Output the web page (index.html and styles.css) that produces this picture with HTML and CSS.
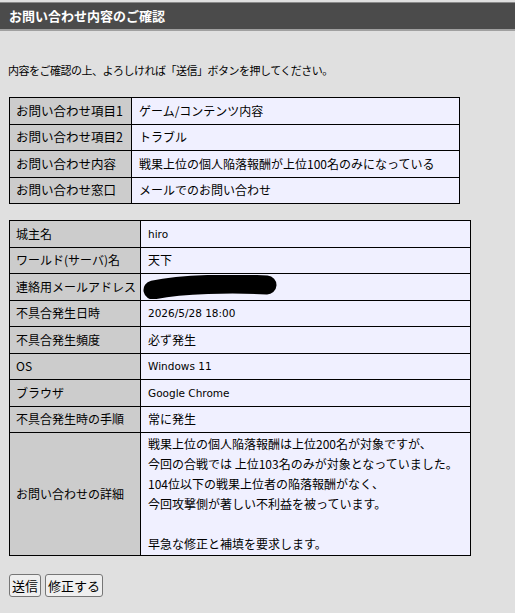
FILE: index.html
```html
<!DOCTYPE html>
<html lang="ja">

<head>
    <meta charset="utf-8">
    <title>お問い合わせ内容のご確認</title>
    <link rel="stylesheet" href="styles.css">
</head>

<body>
    <h1 class="titlebar">お問い合わせ内容のご確認</h1>
    <main class="content">
        <p class="lead">内容をご確認の上、よろしければ「送信」ボタンを押してください。</p>

        <table class="confirm confirm-top">
            <tr>
                <th>お問い合わせ項目1</th>
                <td>ゲーム/コンテンツ内容</td>
            </tr>
            <tr>
                <th>お問い合わせ項目2</th>
                <td>トラブル</td>
            </tr>
            <tr>
                <th>お問い合わせ内容</th>
                <td>戦果上位の個人陥落報酬が上位100名のみになっている</td>
            </tr>
            <tr>
                <th>お問い合わせ窓口</th>
                <td>メールでのお問い合わせ</td>
            </tr>
        </table>

        <table class="confirm confirm-detail">
            <tr>
                <th>城主名</th>
                <td class="ascii">hiro</td>
            </tr>
            <tr>
                <th>ワールド(サーバ)名</th>
                <td>天下</td>
            </tr>
            <tr>
                <th>連絡用メールアドレス</th>
                <td class="masked">
                    <svg class="redact" width="136" height="24" viewBox="0 0 136 24">
                        <path d="M11 15 C 40 9, 90 8, 125 10" stroke="#000" stroke-width="19" stroke-linecap="round" fill="none" />
                    </svg>
                </td>
            </tr>
            <tr>
                <th>不具合発生日時</th>
                <td class="ascii">2026/5/28 18:00</td>
            </tr>
            <tr>
                <th>不具合発生頻度</th>
                <td>必ず発生</td>
            </tr>
            <tr>
                <th>OS</th>
                <td class="ascii">Windows 11</td>
            </tr>
            <tr>
                <th>ブラウザ</th>
                <td class="ascii">Google Chrome</td>
            </tr>
            <tr>
                <th>不具合発生時の手順</th>
                <td>常に発生</td>
            </tr>
            <tr>
                <th>お問い合わせの詳細</th>
                <td class="detail">戦果上位の個人陥落報酬は上位200名が対象ですが、<br>今回の合戦では 上位103名のみが対象となっていました。<br>104位以下の戦果上位者の陥落報酬がなく、<br>今回攻撃側が著しい不利益を被っています。<br><br>早急な修正と補填を要求します。</td>
            </tr>
        </table>

        <form class="actions">
            <button type="button">送信</button>
            <button type="button">修正する</button>
        </form>
    </main>
</body>

</html>
```

FILE: styles.css
```css
body {
    font-family: "Noto Sans CJK JP", sans-serif;
    background-color: #e0e0e0;
    color: #000;
    margin: 0;
    padding: 2px 0 0 0;
}

.titlebar {
    margin: 0;
    height: 26px;
    line-height: 26px;
    padding: 0 9px;
    font-size: 13px;
    font-weight: bold;
    color: #fff;
    background-color: #4b4b4b;
    border-top: 1px solid #8a8a8a;
    border-bottom: 2px solid #a0a0a0;
}

.content {
    padding: 0 9px;
}

.lead {
    margin: 31px 0 19px -1px;
    font-size: 11px;
    line-height: 16px;
    letter-spacing: -0.5px;
}

table.confirm {
    border-collapse: collapse;
    table-layout: fixed;
}

.confirm th,
.confirm td {
    border: 1px solid #000;
    height: 25.5px;
    padding: 0 7px;
    text-align: left;
    font-weight: normal;
    white-space: nowrap;
    vertical-align: middle;
    line-height: 18px;
}

.confirm th {
    background-color: #cccccc;
    font-size: 12.5px;
    padding-left: 6px;
}

.confirm td {
    background-color: #f0f0ff;
    font-size: 12px;
}

.confirm-top {
    width: 451px;
}

.confirm-top th {
    width: 108px;
}

.confirm-detail {
    width: 462px;
    margin-top: 16px;
}

.confirm-detail th {
    width: 117px;
    font-size: 12px;
}

.confirm td.ascii {
    font-family: "DejaVu Sans", sans-serif;
    font-size: 10.5px;
}

.confirm td.masked {
    padding: 0 0 0 1px;
}

.redact {
    display: block;
}

.confirm td.detail {
    line-height: 20px;
    padding-top: 1px;
    padding-bottom: 1px;
}

.actions {
    display: flex;
    gap: 4px;
    margin-top: 18px;
}

.actions button {
    font-family: "Noto Sans CJK JP", sans-serif;
    font-size: 13px;
    height: 23px;
    padding: 0 2px;
    background-color: #efefef;
    border: 1px solid #767676;
    border-radius: 3px;
    color: #000;
}
```
